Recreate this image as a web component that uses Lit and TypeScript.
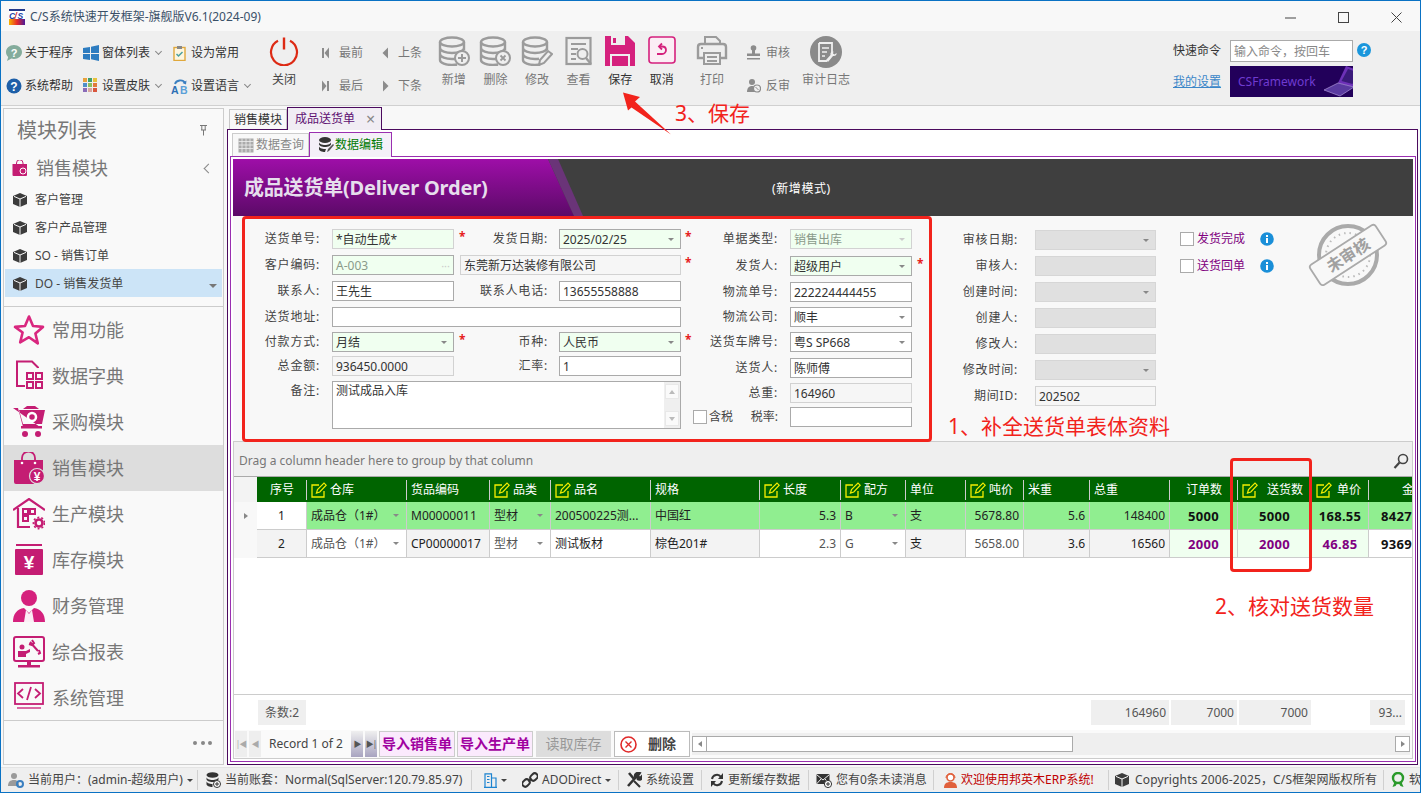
import { LitElement, html, css, svg } from 'lit'
import { customElement } from 'lit/decorators.js'

const ic = (w: number, h: number, body: unknown, vb?: string) =>
  html`<svg class="ic" width=${w} height=${h} viewBox=${vb ?? `0 0 ${w} ${h}`}>${body}</svg>`

const PINK = '#c41d73'
const GR = '#9b9b9b'

const dbBody = svg`
  <g fill="none" stroke=${GR} stroke-width="2.4">
    <ellipse cx="14" cy="6" rx="12" ry="4.5"/>
    <path d="M2 6v18c0 3 6 5 12 5 2 0 4-.2 5-.5M26 6v8M2 12c0 3 6 5 12 5s12-2 12-5M2 18c0 3 6 5 12 5 1.5 0 3-.1 4-.3"/>
  </g>`

const icons = {
  bubble: ic(17, 17, svg`<path d="M9 1c4.4 0 8 3 8 7s-3.600 7-8 7c-1 0-1.800-.1-2.600-.4L2 17l1.200-4C1.800 11.800 1 10 1 8c0-4 3.600-7 8-7z" fill="#84ac9c"/><text x="9" y="12.500" font-size="11" font-weight="700" fill="#fff" text-anchor="middle" font-family="Liberation Sans">?</text>`),
  help: ic(16, 16, svg`<circle cx="8" cy="8" r="7.500" fill="#1d5fa8"/><text x="8" y="12.500" font-size="12" font-weight="700" fill="#fff" text-anchor="middle" font-family="Liberation Sans">?</text>`),
  win: ic(16, 16, svg`<path d="M0 3l7-1v6H0zM8 1.800L16 0v8H8zM0 9h7v6l-7-1zM8 9h8v7l-8-1.800z" fill="#2d7cc0"/>`),
  skin: ic(15, 15, svg`<g>
    <rect width="4" height="4" fill="#e8a23c"/><rect x="5" width="4" height="4" fill="#3f9e6b"/><rect x="10" width="4" height="4" fill="#e8c13c"/>
    <rect y="5" width="4" height="4" fill="#4f8fc8"/><rect x="5" y="5" width="4" height="4" fill="#8cc05a"/><rect x="10" y="5" width="4" height="4" fill="#e07b3c"/>
    <rect y="10" width="4" height="4" fill="#8a6bb8"/><rect x="5" y="10" width="4" height="4" fill="#d9a7a0"/><rect x="10" y="10" width="4" height="4" fill="#d9563c"/></g>`),
  clip: ic(13, 16, svg`<rect x="1" y="2.500" width="11" height="13" fill="#fdf6e0" stroke="#e0a83c" stroke-width="1.400"/><rect x="4" y="1" width="5" height="3" fill="#888"/><path d="M3.500 9l2 2 4-4" fill="none" stroke="#4aa0a0" stroke-width="1.500"/>`),
  lang: ic(17, 16, svg`<path d="M4 6c1-4 8-5 10-1" fill="none" stroke="#3a7fc0" stroke-width="1.800"/><path d="M15.500 2.500l-.5 4-3.500-1.500z" fill="#3a7fc0"/><text x="0" y="15.500" font-size="10.500" font-weight="700" fill="#2d6fb5" font-family="Liberation Sans">A</text><text x="9" y="15.500" font-size="10.500" font-weight="700" fill="#5aa0d8" font-family="Liberation Sans">B</text>`),
  power: ic(30, 30, svg`<path d="M9 4.800a13 13 0 1 0 12 0" fill="none" stroke="#dd2a14" stroke-width="2.200"/><path d="M15 1.500v12" stroke="#dd2a14" stroke-width="2.400"/>`),
  first: ic(12, 12, svg`<rect x="1" y="1" width="2" height="10" fill="#8c8c8c"/><path d="M8 .5v11L3.500 6z" fill="#8c8c8c"/>`),
  last: ic(12, 12, svg`<rect x="6" y="1" width="2" height="10" fill="#8c8c8c"/><path d="M1 .5v11L5.500 6z" fill="#8c8c8c"/>`),
  prev: ic(12, 12, svg`<path d="M7 .5v11L1.500 6z" fill="#8c8c8c"/>`),
  next: ic(12, 12, svg`<path d="M2 .5v11L7.500 6z" fill="#8c8c8c"/>`),
  add: ic(32, 30, svg`${dbBody}<circle cx="24" cy="22" r="7" fill="#efefef" stroke=${GR} stroke-width="2"/><path d="M24 18v8M20 22h8" stroke=${GR} stroke-width="2"/>`),
  del: ic(32, 30, svg`${dbBody}<circle cx="24" cy="22" r="7" fill="#efefef" stroke=${GR} stroke-width="2"/><path d="M21.500 19.500l5 5M26.500 19.500l-5 5" stroke=${GR} stroke-width="1.800"/>`),
  edit: ic(32, 30, svg`${dbBody}<path d="M18 29l1-5 8-9 4 3-8 9z" fill="#efefef" stroke=${GR} stroke-width="2"/>`),
  view: ic(28, 30, svg`<rect x="1.500" y="2" width="24" height="26" fill="none" stroke=${GR} stroke-width="2.200"/><path d="M6 8h15M6 13h7M6 18h5M6 23h5" stroke=${GR} stroke-width="2"/><circle cx="17.500" cy="18" r="5" fill="#efefef" stroke=${GR} stroke-width="2"/><path d="M21 22l5 6" stroke=${GR} stroke-width="2.400"/>`),
  save: ic(30, 30, svg`<path d="M0 0h23l7 7v23H0z" fill="#d5217d"/><rect x="6" y="0" width="14" height="9" fill="#efefef"/><rect x="8" y="2" width="3" height="5" fill="#d5217d"/><rect x="5" y="18" width="20" height="12" fill="#efefef"/><rect x="7" y="20" width="16" height="10" fill="#d5217d"/>`),
  undo: ic(28, 28, svg`<rect x="1" y="1" width="26" height="26" rx="3" fill="#fbeef5" stroke="#d5217d" stroke-width="1.600"/><path d="M14 7.500L11 10.500l3 3" fill="none" stroke="#d5217d" stroke-width="1.800"/><path d="M11.500 10.500h2.500c2.500 0 4 1.500 4 3.500s-1.500 4-4 4H9" fill="none" stroke="#d5217d" stroke-width="1.800"/>`),
  print: ic(32, 30, svg`<path d="M9 8V1h11l4 4v3" fill="none" stroke=${GR} stroke-width="2"/><path d="M7 22H2V11c0-2 1-3 3-3h22c2 0 3 1 3 3v11h-5" fill="none" stroke=${GR} stroke-width="2.400"/><rect x="8" y="17" width="16" height="11" fill="none" stroke=${GR} stroke-width="2"/><path d="M11 21h10M11 25h10M5 12h2" stroke=${GR} stroke-width="2"/>`),
  stamp: ic(15, 15, svg`<circle cx="7.500" cy="3" r="2.800" fill="#8c8c8c"/><rect x="6" y="4" width="3" height="5" fill="#8c8c8c"/><rect x="1" y="8.500" width="13" height="2.500" fill="#8c8c8c"/><rect x="1" y="13" width="13" height="1.500" fill="#8c8c8c"/>`),
  unstamp: ic(15, 15, svg`<circle cx="6" cy="4" r="3" fill="#8c8c8c"/><path d="M1 14c0-4 2-6 5-6s4 2 4 6z" fill="#8c8c8c"/><circle cx="11" cy="10.500" r="3.500" fill="#efefef" stroke="#8c8c8c" stroke-width="1.200"/><path d="M9.500 9l3 3" stroke="#8c8c8c"/>`),
  audit: ic(32, 32, svg`<circle cx="16" cy="16" r="16" fill="#8a8a8a"/><path d="M9 7h13v11M9 7v18h8" fill="none" stroke="#efefef" stroke-width="1.800"/><path d="M12 12h7M12 16h5M12 20h3" stroke="#efefef" stroke-width="1.500"/><path d="M18 26l5-6c2 .5 4-1 3.500-3l-2 1.500-1.500-1 .5-2c-2-.3-3.500 1-3 3.500l-4.500 5z" fill="#efefef"/>`),
  qhelp: ic(14, 14, svg`<circle cx="7" cy="7" r="7" fill="#1a96dc"/><text x="7" y="11" font-size="11" font-weight="700" fill="#fff" text-anchor="middle" font-family="Liberation Sans">?</text>`),
  info: ic(14, 14, svg`<circle cx="7" cy="7" r="6.800" fill="#1a8fd8"/><rect x="6" y="3" width="2" height="2" fill="#fff"/><rect x="6" y="6" width="2" height="5" fill="#fff"/>`),
  pin: ic(9, 11, svg`<path d="M1 .5h7M2 5h5M4.500 5v5.500M2.800 .5v4.500M6.200 .5v4.500" fill="none" stroke="#777" stroke-width="1"/>`),
  cube: ic(14, 14, svg`<path d="M7 0l7 3v8l-7 3-7-3V3z" fill="#3c3c3c"/><path d="M1 3.400L7 6l6-2.600M7 6v8" fill="none" stroke="#f8f8f8" stroke-width="1"/>`),
  star: ic(32, 32, svg`<path d="M16 2.500l4 9.500 10 .9-7.600 6.600 2.400 9.900L16 23.200 7.200 28.400l2.400-9.900L2 12.900l10-.9z" fill="none" stroke="#d9277f" stroke-width="2.600" stroke-linejoin="round"/>`),
  dict: ic(32, 32, svg`<path d="M12 26H4V1.500h15l6 6V8" fill="none" stroke=${PINK} stroke-width="2"/><g fill="none" stroke=${PINK} stroke-width="2"><rect x="14" y="13" width="6" height="6"/><rect x="23" y="13" width="6" height="6"/><rect x="14" y="22" width="6" height="6"/><rect x="23" y="22" width="6" height="6"/></g>`),
  cart: ic(32, 32, svg`<path d="M0 2h5l5 19h17M6 4h26l-3 14H10z" fill=${PINK}/><path d="M10 3l4-3h8l4 3z" fill=${PINK}/><rect x="8" y="20" width="21" height="2.500" fill=${PINK}/><circle cx="12" cy="28" r="3" fill=${PINK}/><circle cx="25" cy="28" r="3" fill=${PINK}/><circle cx="19" cy="11" r="4" fill="none" stroke="#fff" stroke-width="2.500"/>`),
  bag: ic(32, 32, svg`<path d="M1 8h29v15a9 9 0 0 0-9 9H3a2 2 0 0 1-2-2z" fill=${PINK}/><path d="M9 9V6a6 6 0 0 1 13 0v3" fill="none" stroke=${PINK} stroke-width="1.800"/><circle cx="9" cy="11" r="1.300" fill="#fff"/><circle cx="22" cy="11" r="1.300" fill="#fff"/><circle cx="24" cy="24" r="7.500" fill=${PINK} stroke="#ddd" stroke-width="1.200"/><text x="24" y="28.500" font-size="12" font-weight="700" fill="#fff" text-anchor="middle" font-family="Liberation Sans">¥</text>`),
  house: ic(32, 32, svg`<path d="M0 12L16 1l16 11M5 10v19h12" fill="none" stroke=${PINK} stroke-width="2.200"/><g fill="none" stroke=${PINK} stroke-width="2"><rect x="10" y="11" width="5" height="5"/><rect x="17" y="11" width="5" height="5"/><rect x="10" y="18" width="5" height="5"/></g><circle cx="26" cy="25" r="3.500" fill="none" stroke=${PINK} stroke-width="2.600"/><circle cx="26" cy="25" r="5.600" fill="none" stroke=${PINK} stroke-width="1.600" stroke-dasharray="2 2"/>`),
  money: ic(32, 32, svg`<rect x="3" y="0" width="26" height="2" fill=${PINK}/><rect x="2" y="5" width="28" height="26" rx="1" fill=${PINK}/><text x="16" y="25" font-size="19" font-weight="700" fill="#fff" text-anchor="middle" font-family="Liberation Sans">¥</text>`),
  person: ic(32, 32, svg`<circle cx="16" cy="8" r="8" fill="#d5217d"/><path d="M0 32c0-8 4-13 11-14l5 5 5-5c7 1 11 6 11 14z" fill="#d5217d"/><path d="M13 20l3 4 3-4 2 12H11z" fill="#fbeef5"/>`),
  report: ic(32, 32, svg`<rect x="1" y="1" width="30" height="24" rx="2" fill="none" stroke=${PINK} stroke-width="2"/><rect x="5" y="29" width="22" height="2.500" fill=${PINK}/><rect x="14" y="25" width="4" height="4" fill=${PINK}/><circle cx="9" cy="11" r="2.500" fill=${PINK}/><path d="M5 21v-6h8l4-2v3l-4 2v3z" fill=${PINK}/><path d="M17 6l8 9M19 4l2 3-2 2-3-1M26 14l1 3-2 1" fill="none" stroke=${PINK} stroke-width="2"/>`),
  code: ic(30, 30, svg`<rect x="1" y="1" width="28" height="21" fill="none" stroke=${PINK} stroke-width="1.800"/><path d="M9 7l-5 4.500 5 4.500M21 7l5 4.500-5 4.500M17 5l-4 13" fill="none" stroke=${PINK} stroke-width="1.800"/><rect x="3" y="25" width="24" height="2" fill="#d96aa4"/>`),
  gridT: ic(16, 15, svg`<rect x=".5" y=".5" width="15" height="14" fill="#aaa"/><path d="M.5 3.500h15M.5 7h15M.5 10.500h15M4 .5v14M8 .5v14M12 .5v14" stroke="#eee" stroke-width=".8"/>`),
  dbPen: ic(16, 16, svg`<ellipse cx="7" cy="3" rx="6" ry="3" fill="#333"/><path d="M1 5c0 2 3 3 6 3s6-1 6-3v2c0 2-3 3-6 3S1 9 1 7zM1 9c0 2 3 3 6 3l1 0-1 3c-3 0-6-1-6-3z" fill="#333"/><path d="M9 15l1-3 5-5 1 1-5 6z" fill="#555"/>`),
  pen: ic(16, 16, svg`<path d="M13 9v6H1V3h7" fill="none" stroke="#f4ee00" stroke-width="1.300"/><path d="M5.500 11l1-3.500L13 1l2.200 2.200L8.800 10z" fill="none" stroke="#f4ee00" stroke-width="1.200"/>`),
  search: ic(16, 16, svg`<circle cx="10" cy="6" r="4.500" fill="none" stroke="#444" stroke-width="1.600"/><path d="M6.500 9.500L1.500 15" stroke="#444" stroke-width="2.200"/>`),
  delX: ic(17, 17, svg`<circle cx="8.500" cy="8.500" r="7.500" fill="#fff" stroke="#e02a2a" stroke-width="1.600"/><path d="M5.500 5.500l6 6M11.500 5.500l-6 6" stroke="#e02a2a" stroke-width="1.400"/>`),
  users: ic(16, 16, svg`<circle cx="6" cy="4" r="3" fill="#9a9a9a"/><path d="M0 14c0-4 2-6 6-6s5 2 5 6z" fill="#9a9a9a"/><circle cx="12" cy="12" r="3" fill="none" stroke="#3a7fc0" stroke-width="2"/>`),
  dbAdd: ic(15, 16, svg`<ellipse cx="6.500" cy="3" rx="6" ry="2.800" fill="#333"/><path d="M.5 5c0 2 3 3 6 3s6-1 6-3v2c0 2-3 3-6 3s-6-1-6-3zM.5 9c0 2 3 3 6 3v3c-3 0-6-1-6-3z" fill="#333"/><circle cx="11" cy="12" r="3.500" fill="#fff" stroke="#333"/><path d="M11 10v4M9 12h4" stroke="#333"/>`),
  bldg: ic(13, 15, svg`<path d="M1 .8h6.500v13.500H1zM7.500 5H12v9.300H7.500M0 14.300h13M3 3.500h2.500M3 6.500h2.500M3 9.500h2.500" fill="none" stroke="#1d84d0" stroke-width="1.200"/>`),
  link: ic(16, 16, svg`<path d="M6.500 9.500l3-3" stroke="#333" stroke-width="2"/><rect x="9" y="1" width="6" height="8" rx="3" transform="rotate(45 12 5)" fill="none" stroke="#333" stroke-width="2"/><rect x="1" y="7" width="6" height="8" rx="3" transform="rotate(45 4 11)" fill="none" stroke="#333" stroke-width="2"/>`),
  tools: ic(16, 16, svg`<path d="M2 14L11 4M3 1l5 6" stroke="#333" stroke-width="2.600"/><path d="M9 5c-1-3 2-5 5-4l-2 3 2 2 2-2c.5 3-2 5-5 3M8 9l6 6" fill="#333" stroke="#333" stroke-width="2"/>`),
  refresh: ic(14, 14, svg`<path d="M2 6a5 5 0 0 1 9-2M12 8a5 5 0 0 1-9 2" fill="none" stroke="#333" stroke-width="2"/><path d="M13 0v6H8zM1 14V8h5z" fill="#333"/>`),
  mail: ic(16, 16, svg`<rect x=".5" y="2" width="13" height="10" fill="#333"/><path d="M.5 2.500L7 8l6.500-5.500M.5 12L5 7M13.500 12L9 7" fill="none" stroke="#efefef"/><circle cx="12" cy="12" r="3.600" fill="#fff" stroke="#333"/><path d="M12 10v4M10 12h4" stroke="#333"/>`),
  agent: ic(13, 15, svg`<circle cx="6.500" cy="4.500" r="3.500" fill="#fff" stroke="#e0603c" stroke-width="1.600"/><path d="M0 15c0-4 2-6 6.500-6S13 11 13 15z" fill="#e0603c"/><path d="M2 5c0-6 9-6 9 0" fill="none" stroke="#e0603c"/>`),
  ribbon: ic(14, 16, svg`<circle cx="7" cy="6" r="5" fill="none" stroke="#2a9a2a" stroke-width="2.400"/><path d="M3.500 10L1.500 15l3-1 2-3M10.500 10l2 5-3-1-2-3" fill="#2a9a2a"/>`),
  logo: ic(16, 16, svg`<defs><linearGradient id="lg" x1="0" x2="1" y1="0" y2="0"><stop offset="0" stop-color="#f7b500"/><stop offset=".5" stop-color="#e82a2a"/><stop offset="1" stop-color="#4a1a9a"/></linearGradient></defs><rect width="16" height="2" fill="#243a8a"/><rect y="2" width="16" height="8" fill="#fff"/><rect y="10" width="16" height="6" fill="url(#lg)"/><text x="0" y="9.500" font-size="8.500" font-weight="700" font-style="italic" font-family="Liberation Sans" fill="#1c3fa8">C</text><text x="5.500" y="9.500" font-size="8.500" font-weight="700" font-style="italic" font-family="Liberation Sans" fill="#d8202a">/</text><text x="8.500" y="9.500" font-size="8.500" font-weight="700" font-style="italic" font-family="Liberation Sans" fill="#1c3fa8">S</text>`),
  laptop: ic(46, 31, svg`<path d="M30 0L44 5l-6 16-16-4z" fill="#7a3ac8" opacity=".85"/><path d="M32 3l9 3-4.500 12-11-3z" fill="#3a1a7a"/><path d="M8 24l14-7 16 4-14 9z" fill="#5a3aa0" stroke="#c0a8e8" stroke-width=".6"/>`),
  stampBig: ic(80, 64, svg`<circle cx="40" cy="32" r="29" fill="none" stroke="#aaa" stroke-width="4"/><circle cx="40" cy="32" r="22" fill="none" stroke="#bbb" stroke-width="2" stroke-dasharray="1.500 4"/><g transform="rotate(-33 40 32)"><rect x="1" y="20" width="78" height="24" rx="3" fill="#f8f8f8" stroke="#aaa" stroke-width="1.800"/><text x="40" y="38" font-size="16" font-weight="700" fill="#a0a0a0" text-anchor="middle" font-family="Noto Sans CJK SC">未审核</text></g>`),
}

const cols = [
  { t: '序号', k: 'c' }, { t: '仓库', e: 1 }, { t: '货品编码' }, { t: '品类', e: 1 }, { t: '品名', e: 1 },
  { t: '规格' }, { t: '长度', e: 1 }, { t: '配方', e: 1 }, { t: '单位' }, { t: '吨价', e: 1 },
  { t: '米重' }, { t: '总重' }, { t: '订单数', k: 'r' }, { t: '送货数', e: 1, k: 'w' }, { t: '单价', e: 1, k: 'w2' }, { t: '金额', k: 'c' },
]

const rows = [
  ['1', '成品仓（1#）', 'M00000011', '型材', '200500225测...', '中国红', '5.3', 'B', '支', '5678.80', '5.6', '148400', '5000', '5000', '168.55', '842750.00'],
  ['2', '成品仓（1#）', 'CP00000017', '型材', '测试板材', '棕色201#', '2.3', 'G', '支', '5658.00', '3.6', '16560', '2000', '2000', '46.85', '93690.00'],
]
const cellKind = ['c', 'dd', '', 'dd', '', '', 'r', 'dd', '', 'r', 'r', 'r', 'bd', 'bd', 'bd', 'mn']
const row2Bg = ['g', 'n', 'g', 'n', 'n', 'g', 'n', 'n', 'g', 'n', 'g', 'g', 'p', 'p', 'p', 'n']

@customElement('app-root')
export class AppRoot extends LitElement {
  static styles = css`
    :host {
      display: block;
      width: 1421px;
      height: 793px;
      position: relative;
      overflow: hidden;
      font: 12px/16px "Noto Sans", "Noto Sans CJK SC", sans-serif;
      color: #444;
      background: #f8f8f8;
    }
    * { box-sizing: border-box; }
    .ic { display: block; flex: none; }

    .win { height: 793px; border: 1px solid #0a72c4; display: flex; flex-direction: column; }

    .title { height: 30px; flex: none; display: flex; align-items: center; padding: 2px 0 0 8px; gap: 5px; color: #3a5068; background: #f8f8f8; }
    .title .grow { flex: 1; }
    .wbtn { width: 48px; display: flex; justify-content: center; }

    .ribbon { height: 75px; flex: none; background: #efefef; border-bottom: 1px solid #d0d0d0; display: flex; padding: 5px 0 0 4px; color: #444; }
    .small { display: grid; grid-template-columns: 77px 89px 90px; grid-template-rows: 33px 33px; flex: none; }
    .sm { display: flex; align-items: center; gap: 3px; color: #333; }
    .sm .i { width: 17px; display: flex; justify-content: center; flex: none; }
    .chev { width: 5px; height: 5px; border-right: 1px solid #888; border-bottom: 1px solid #888; transform: rotate(45deg); margin: -3px 0 0 3px; }
    .big { display: flex; flex-direction: column; align-items: center; width: 41.6px; flex: none; color: #777; white-space: nowrap; }
    .big .box { height: 34px; display: flex; align-items: flex-start; justify-content: center; }
    .big span { line-height: 20px; }
    .big.on { color: #333; }
    .power { width: 46px; color: #444; }
    .nav { display: grid; grid-template-rows: 33px 33px; flex: none; margin-left: 12px; width: 60px; color: #777; }
    .nav.two { margin-left: 2px; width: 52px; }
    .nav div { display: flex; align-items: center; gap: 6px; padding-left: 2px; }
    .nav.two div { padding-left: 0; gap: 5px; }
    .print { margin-left: 8.4px; width: 42px; }
    .audit-s { display: grid; grid-template-rows: 33px 33px; width: 57px; margin-left: 11px; flex: none; color: #777; }
    .audit-s div { display: flex; align-items: center; gap: 5px; padding-left: 2px; }
    .auditlog { width: 50px; }
    .grow { flex: 1; }
    .quick { display: grid; grid-template-columns: 57px 123px 18px; grid-template-rows: 22px 31px; row-gap: 4px; align-items: center; margin: 4px 49px 0 0; flex: none; color: #333; }
    .quick input { width: 100%; height: 22px; font: inherit; border: 1px solid #aaa; background: #fff; padding: 0 3px; color: #888; outline: none; }
    .quick input::placeholder { color: #888; opacity: 1; }
    .quick .q { padding-left: 4px; margin-top: -2px; }
    .mylink { color: #3a86c8; text-decoration: underline; }
    .banner { height: 31px; background: #22005a; display: flex; align-items: center; justify-content: space-between; padding-left: 8px; color: #6f3bd0; overflow: hidden; }

    .main { flex: 1; display: flex; min-height: 0; }

    .side { width: 221px; margin: 2px 0 2px 2px; border: 1px solid #ccc; flex: none; display: flex; flex-direction: column; background: #f9f9f9; color: #777; }
    .side-head { height: 41px; display: flex; align-items: center; justify-content: space-between; padding: 2px 15px 0 13px; font-size: 20px; line-height: 26px; flex: none; }
    .grp { height: 34px; display: flex; align-items: center; padding: 2px 11px 0 8px; font-size: 18px; gap: 8px; flex: none; }
    .grp .ch { width: 7px; height: 7px; border-left: 1.500px solid #888; border-bottom: 1.500px solid #888; transform: rotate(45deg); margin-left: auto; }
    .sub { height: 28px; display: flex; align-items: center; gap: 8px; padding: 1px 0 0 8px; margin: 0 1px; color: #444; flex: none; }
    .sub.sel { background: #cce4f7; }
    .sub .tri { margin: 5px 5px 0 auto; width: 0; height: 0; border: 4px solid transparent; border-top: 4px solid #777; border-bottom: 0; }
    .subs { padding-bottom: 9px; border-bottom: 1px solid #ccc; flex: none; margin-top: 1px; }
    .mods { flex: none; }
    .mod { height: 46px; display: flex; align-items: center; gap: 7px; padding-left: 9px; font-size: 18px; }
    .mod .i { width: 32px; height: 32px; display: flex; justify-content: center; flex: none; }
    .mod.sel { background: #dddddd; }
    .more { border-top: 1px solid #ccc; margin-top: -1px; flex: 1; display: flex; justify-content: flex-end; align-items: center; gap: 3.500px; padding: 0 11px 0 0; }
    .more i { width: 4px; height: 4px; border-radius: 50%; background: #888; }

    .content { flex: 1; min-width: 0; margin: 1px 2px 2px 3px; display: flex; flex-direction: column; }
    .tabs { display: flex; height: 22px; flex: none; padding-left: 2px; align-items: flex-end; }
    .tab { height: 20px; width: 58px; border: 1px solid #c8c8c8; border-bottom: 0; display: flex; align-items: center; justify-content: center; color: #333; background: #f8f8f8; }
    .tab.act { height: 23px; width: 95px; margin-bottom: -1px; border: 1px solid #4b0a5e; border-bottom: 0; background: #f1edf4; color: #5e1072; position: relative; z-index: 1; justify-content: flex-start; padding-left: 7px; gap: 11px; }
    .tab.act b { font-weight: 400; color: #888; font-size: 16px; }
    .panel { flex: 1; min-height: 0; border: 1px solid #4b0a5e; padding: 2px 1px 2px 2px; display: flex; flex-direction: column; background: #fff; }
    .tabs2 { display: flex; height: 24px; flex: none; padding-left: 2px; align-items: flex-end; }
    .tab2 { width: 77px; height: 23px; border: 1px solid #ccc; border-bottom: 0; color: #888; display: flex; align-items: center; gap: 2px; padding-left: 5px; background: #f8f8f8; }
    .tab2.act { width: 83px; height: 25px; margin-bottom: -1px; border: 1px solid #9a2fb0; border-bottom: 0; color: #007a00; background: #f4f0f8; position: relative; z-index: 1; padding-left: 8px; gap: 1px; }
    .inner { flex: 1; min-height: 0; border: 1px solid #9a2fb0; padding: 2px; display: flex; flex-direction: column; }

    .head { height: 57px; flex: none; background: #3f3f3f; display: flex; align-items: center; overflow: hidden; }
    .head .pur { width: 341px; height: 57px; flex: none; background: linear-gradient(#9e0ea8, #5c0a68); clip-path: polygon(0 0, 315px 0, 341px 57px, 0 57px); display: flex; align-items: center; padding-left: 11px; font-size: 20px; font-weight: 700; color: #e6deec; white-space: nowrap; letter-spacing: -.2px; }
    .head .stripe { width: 35px; height: 57px; margin-left: -26px; flex: none; background: #6a3478; clip-path: polygon(0 0, 10px 0, 35px 57px, 26px 57px); }
    .head .mode { margin-left: 189px; color: #fff; font-size: 12px; padding-top: 2px; letter-spacing: .6px; }

    .form { height: 225px; flex: none; display: flex; background: #f8f8f8; }
    .gl { display: grid; grid-template-columns: 87px 12px 122px 16px 78px 11px 122px 9px; grid-template-rows: 26px 26px 26px 25px 24px 25px 48px; padding-top: 13px; flex: none; align-items: start; }
    .gc { display: grid; grid-template-columns: 88px 12px 122px 15px; grid-template-rows: 27px 26px 25px 25px 26px 25px 24px 20px; padding-top: 13px; flex: none; align-items: start; }
    .gd { display: grid; grid-template-columns: 91px 17px 121px; grid-template-rows: repeat(7, 26px); padding-top: 14px; flex: none; align-items: start; }
    .lb { grid-column: 1; text-align: right; line-height: 20px; color: #444; white-space: nowrap; letter-spacing: .8px; }
    .lb.m { grid-column: 5; }
    .in { height: 20px; border: 1px solid #aaa; background: #fff; display: flex; align-items: center; padding: 1px 3px 0; color: #333; white-space: nowrap; overflow: hidden; }
    .in.req { background: #f0fff0; }
    .in.ro { border-color: #d2d2d2; background: #f6f6f6; }
    .in.rq { border-color: #d2d2d2; background: #f0fff0; }
    .in.dis { border-color: #d6d6d6; background: #e0e0e0; }
    .in .car { margin-left: auto; margin-right: 3px; width: 0; height: 0; border: 3.500px solid transparent; border-top: 3.500px solid #888; border-bottom: 0; flex: none; }
    .in .car.lt { border-top-color: #ccc; }
    .in .dots { margin-left: auto; color: #ccc; font-size: 11px; letter-spacing: 0; }
    .in.mute { color: #8a9a8a; }
    .a { grid-column: 3; }
    .b { grid-column: 7; }
    .s { color: #e62020; line-height: 16px; padding-left: 5px; font-weight: 700; }
    .s4 { grid-column: 4; }
    .s8 { grid-column: 8; padding-left: 4px; }
    .name { grid-column: 4 / 8; margin-left: 6px; }
    .addr { grid-column: 3 / 8; }
    .memo { grid-column: 3 / 8; height: 48px; align-items: flex-start; padding: 0 0 0 3px; }
    .memo span { padding-top: 1px; }
    .sb { margin-left: auto; width: 16px; height: 46px; background: #efefef; display: flex; flex-direction: column; justify-content: space-between; align-items: center; flex: none; padding: 2px 0; }
    .sb i { width: 14px; height: 15px; background: #fafafa; border: 1px solid #e8e8e8; display: flex; align-items: center; justify-content: center; }
    .up { width: 0; height: 0; border: 3px solid transparent; border-bottom: 4px solid #bbb; border-top: 0; }
    .dn { width: 0; height: 0; border: 3px solid transparent; border-top: 4px solid #bbb; border-bottom: 0; }
    .ctax { display: flex; justify-content: space-between; padding-left: 3px; line-height: 20px; letter-spacing: 0; }
    .ctax span { display: flex; align-items: center; gap: 2px; }
    .cb { width: 14px; height: 14px; border: 1px solid #aaa; background: #fff; display: block; flex: none; }
    .ge { display: grid; grid-template-columns: auto 15px 14px; grid-template-rows: 14px 14px; row-gap: 13px; align-items: center; margin: 16px 0 0 24px; height: 60px; flex: none; color: #800080; }
    .ge div { display: flex; align-items: center; gap: 3px; }
    .stampb { margin: 7px 0 0 34px; flex: none; }

    .gridw { flex: 1; min-height: 0; border: 1px solid #ccc; display: flex; flex-direction: column; background: #fff; }
    .group { height: 35px; flex: none; background: #efefef; border-bottom: 1px solid #aaa; display: flex; align-items: center; justify-content: space-between; padding: 4px 3px 0 5px; color: #777; }
    .tbl, .foot { display: grid; grid-template-columns: 23px 50px 100px 83px 61px 100px 109px 81px 65px 60px 58px 66px 80px 68px 74px 57px 90px; overflow: hidden; flex: none; }
    .hc0 { height: 25px; background: #f3f3f3; }
    .hc { height: 25px; background: #006400 linear-gradient(#ccc, #ccc) right center / 1px 20px no-repeat; color: #fff; display: flex; align-items: center; gap: 3px; padding: 0 4px; overflow: hidden; white-space: nowrap; }
    .hc.c { justify-content: center; }
    .hc.r { justify-content: flex-end; padding-right: 16px; }
    .hc.w { gap: 9px; }
    .hc.w2 { gap: 5px; }
    .ind { height: 28px; background: #f8f8f8; display: flex; align-items: center; justify-content: center; }
    .ind .t { width: 0; height: 0; border: 3.500px solid transparent; border-left: 4px solid #888; border-right: 0; }
    .td { height: 28px; border-right: 1px solid #ccc; border-bottom: 1px solid #ccc; display: flex; align-items: center; padding: 0 4px; overflow: hidden; white-space: nowrap; color: #222; }
    .td.on { background: #90ee90; }
    .td.w { background: #fff; }
    .td.g { background: #f3f3f3; }
    .td.n { background: #fff; }
    .td.p { background: #f0fff0; }
    .td.c { justify-content: center; }
    .td.r { justify-content: flex-end; }
    .td.dd { justify-content: space-between; }
    .td.dd i { width: 0; height: 0; border: 3px solid transparent; border-top: 3.500px solid #888; border-bottom: 0; margin-right: 3px; flex: none; }
    .td.n.dd { color: #555; }
    .td.r.n { color: #555; }
    .td.bd, .td.mn { font-weight: 700; font-size: 13px; color: #111; letter-spacing: .3px; }
    .td.bd { justify-content: center; }
    .td.bd.p { color: #800080; }
    .td.mn { padding-left: 12px; border-right: 0; }
    .fill { flex: 1; min-height: 0; border-bottom: 1px solid #ccc; }
    .foot { height: 35px; padding-top: 5px; align-items: start; }
    .fc { height: 25px; background: #efefef; display: flex; align-items: center; justify-content: flex-end; padding: 0 3px; margin: 0 1px; color: #555; }
    .fc.l { justify-content: center; }
    .fc.last { width: 35px; }
    .pager { height: 28px; flex: none; display: flex; align-items: center; padding-left: 1px; background: #fafafa; }
    .pg { width: 12px; height: 26px; margin-right: 2px; background: #eee; display: flex; align-items: center; justify-content: center; flex: none; color: #aaa; font-size: 8px; letter-spacing: -1px; }
    .pg.on { background: linear-gradient(#efefef, #a8a4c0); color: #555; }
    .rec { width: 88px; padding-left: 6px; color: #444; flex: none; white-space: nowrap; }
    .btn { width: 76px; height: 26px; margin-right: 2px; border: 1px solid #ccc; background: #fbeafd; color: #a000a0; font-weight: 700; font-size: 14px; display: flex; align-items: center; justify-content: center; flex: none; white-space: nowrap; }
    .btn.off { width: 75px; background: #ddd; border-color: #ddd; color: #999; font-weight: 400; margin-left: 1px; }
    .btn.delb { background: #fff; border-color: #bbb; color: #444; font-weight: 700; margin-left: 1px; gap: 11px; justify-content: flex-start; padding-left: 5px; }
    .hs { flex: 1; height: 22px; margin-right: 2px; background: #efefef; display: flex; align-items: center; }
    .hs .a1 { width: 15px; height: 16px; background: #fff; border: 1px solid #aaa; display: flex; align-items: center; justify-content: center; flex: none; }
    .hs .th { width: 366px; height: 16px; background: #fff; border: 1px solid #aaa; border-left: 0; flex: none; }
    .hs .a2 { margin-left: auto; }
    .la { width: 0; height: 0; border: 3px solid transparent; border-right: 4px solid #888; border-left: 0; }
    .ra { width: 0; height: 0; border: 3px solid transparent; border-left: 4px solid #888; border-right: 0; }

    .status { height: 25px; flex: none; background: #efefef; display: flex; align-items: center; overflow: hidden; color: #444; border-top: 1px solid #e4e4e4; }
    .st { height: 20px; display: flex; align-items: center; gap: 4px; flex: none; white-space: nowrap; border-right: 1px solid #d0d0d0; }
    .st.nb { border-right: 0; }
    .st .car { width: 0; height: 0; border: 3px solid transparent; border-top: 3px solid #444; border-bottom: 0; }
    .st.red { color: #c00000; }
    .st .copy { margin-left: 2px; letter-spacing: .15px; }

    .rect { position: absolute; border: 3px solid #f2231c; border-radius: 4px; pointer-events: none; }
    .note { position: absolute; color: #f2231c; font-size: 21px; line-height: 26px; white-space: nowrap; }
    .arrow { position: absolute; left: 620px; top: 90px; }
  `

  private smallBtn (icon: unknown, text: string, chev = false) {
    return html`<div class="sm"><span class="i">${icon}</span>${text}${chev ? html`<i class="chev"></i>` : ''}</div>`
  }

  private bigBtn (icon: unknown, text: string, cls = '') {
    return html`<div class="big ${cls}"><div class="box">${icon}</div><span>${text}</span></div>`
  }

  private ribbon () {
    return html`
      <div class="ribbon">
        <div class="small">
          ${this.smallBtn(icons.bubble, '关于程序')}
          ${this.smallBtn(icons.win, '窗体列表', true)}
          ${this.smallBtn(icons.clip, '设为常用')}
          ${this.smallBtn(icons.help, '系统帮助')}
          ${this.smallBtn(icons.skin, '设置皮肤', true)}
          ${this.smallBtn(icons.lang, '设置语言', true)}
        </div>
        ${this.bigBtn(icons.power, '关闭', 'power')}
        <div class="nav">
          <div>${icons.first}最前</div>
          <div>${icons.last}最后</div>
        </div>
        <div class="nav two">
          <div>${icons.prev}上条</div>
          <div>${icons.next}下条</div>
        </div>
        ${this.bigBtn(icons.add, '新增')}
        ${this.bigBtn(icons.del, '删除')}
        ${this.bigBtn(icons.edit, '修改')}
        ${this.bigBtn(icons.view, '查看')}
        ${this.bigBtn(icons.save, '保存', 'on')}
        ${this.bigBtn(icons.undo, '取消', 'on')}
        ${this.bigBtn(icons.print, '打印', 'print')}
        <div class="audit-s">
          <div>${icons.stamp}审核</div>
          <div>${icons.unstamp}反审</div>
        </div>
        ${this.bigBtn(icons.audit, '审计日志', 'auditlog')}
        <div class="grow"></div>
        <div class="quick">
          <span>快速命令</span>
          <input placeholder="输入命令，按回车" />
          <span class="q">${icons.qhelp}</span>
          <span class="mylink">我的设置</span>
          <div class="banner"><span>CSFramework</span>${icons.laptop}</div>
          <span></span>
        </div>
      </div>`
  }

  private sidebar () {
    const mods: [unknown, string, boolean?][] = [
      [icons.star, '常用功能'], [icons.dict, '数据字典'], [icons.cart, '采购模块'],
      [icons.bag, '销售模块', true], [icons.house, '生产模块'], [icons.money, '库存模块'],
      [icons.person, '财务管理'], [icons.report, '综合报表'], [icons.code, '系统管理'],
    ]
    const bagSmall = html`<svg class="ic" width="16" height="16" viewBox="0 0 32 32">${svg`<path d="M1 8h29v22a2 2 0 0 1-2 2H3a2 2 0 0 1-2-2z" fill=${PINK}/><path d="M9 9V6a6 6 0 0 1 13 0v3" fill="none" stroke=${PINK} stroke-width="2"/><circle cx="22" cy="22" r="6" fill="none" stroke="#fff" stroke-width="2"/>`}</svg>`
    return html`
      <aside class="side">
        <div class="side-head"><span>模块列表</span>${icons.pin}</div>
        <div class="grp">${bagSmall}<span>销售模块</span><i class="ch"></i></div>
        <div class="subs">
          <div class="sub">${icons.cube}客户管理</div>
          <div class="sub">${icons.cube}客户产品管理</div>
          <div class="sub">${icons.cube}SO - 销售订单</div>
          <div class="sub sel">${icons.cube}DO - 销售发货单<i class="tri"></i></div>
        </div>
        <div class="mods">
          ${mods.map(([i, t, sel]) => html`<div class="mod ${sel ? 'sel' : ''}"><span class="i">${i}</span>${t}</div>`)}
        </div>
        <div class="more"><i></i><i></i><i></i></div>
      </aside>`
  }

  private formArea () {
    const car = html`<i class="car"></i>`
    const star = (c: string) => html`<span class="s ${c}">*</span>`
    return html`
      <div class="form">
        <div class="gl">
          <span class="lb">送货单号:</span><div class="in rq a">*自动生成*</div>${star('s4')}
          <span class="lb m">发货日期:</span><div class="in req b">2025/02/25${car}</div>${star('s8')}

          <span class="lb">客户编码:</span><div class="in req a mute">A-003<span class="dots">···</span></div>
          <div class="in ro name">东莞新万达装修有限公司</div>${star('s8')}

          <span class="lb">联系人:</span><div class="in a">王先生</div>
          <span class="lb m">联系人电话:</span><div class="in b">13655558888</div><span></span>

          <span class="lb">送货地址:</span><div class="in addr"></div><span></span>

          <span class="lb">付款方式:</span><div class="in req a">月结${car}</div>${star('s4')}
          <span class="lb m">币种:</span><div class="in req b">人民币${car}</div>${star('s8')}

          <span class="lb">总金额:</span><div class="in ro a">936450.0000</div>
          <span class="lb m">汇率:</span><div class="in b">1</div><span></span>

          <span class="lb">备注:</span>
          <div class="in memo"><span>测试成品入库</span><div class="sb"><i><b class="up"></b></i><i><b class="dn"></b></i></div></div>
        </div>
        <div class="gc">
          <span class="lb">单据类型:</span><div class="in rq a mute">销售出库<i class="car lt"></i></div><span></span>
          <span class="lb">发货人:</span><div class="in req a">超级用户${car}</div><span class="s">*</span>
          <span class="lb">物流单号:</span><div class="in a">222224444455</div><span></span>
          <span class="lb">物流公司:</span><div class="in a">顺丰${car}</div><span></span>
          <span class="lb">送货车牌号:</span><div class="in a">粤S SP668${car}</div><span></span>
          <span class="lb">送货人:</span><div class="in a">陈师傅</div><span></span>
          <span class="lb">总重:</span><div class="in ro a">164960</div><span></span>
          <div class="lb ctax"><span><i class="cb"></i>含税</span><span>税率:</span></div><div class="in a"></div>
        </div>
        <div class="gd">
          <span class="lb">审核日期:</span><div class="in dis a">${car}</div>
          <span class="lb">审核人:</span><div class="in dis a"></div>
          <span class="lb">创建时间:</span><div class="in dis a">${car}</div>
          <span class="lb">创建人:</span><div class="in dis a"></div>
          <span class="lb">修改人:</span><div class="in dis a"></div>
          <span class="lb">修改时间:</span><div class="in dis a">${car}</div>
          <span class="lb">期间ID:</span><div class="in ro a">202502</div>
        </div>
        <div class="ge">
          <div><i class="cb"></i>发货完成</div><span></span>${icons.info}
          <div><i class="cb"></i>送货回单</div><span></span>${icons.info}
        </div>
        <div class="stampb">${icons.stampBig}</div>
      </div>`
  }

  private table () {
    return html`
      <div class="tbl">
        <div class="hc0"></div>
        ${cols.map(c => html`<div class="hc ${c.k ?? ''}">${c.e ? icons.pen : ''}<span>${c.t}</span></div>`)}
        ${rows.map((r, i) => html`
          <div class="ind">${i === 0 ? html`<i class="t"></i>` : ''}</div>
          ${r.map((v, j) => {
            const bg = i === 0 ? (j === 0 ? 'w' : 'on') : row2Bg[j]
            return html`<div class="td ${cellKind[j]} ${bg}"><span>${v}</span>${cellKind[j] === 'dd' ? html`<i></i>` : ''}</div>`
          })}`)}
      </div>`
  }

  private statusBar () {
    const item = (w: number, pad: number, body: unknown, cls = '') =>
      html`<div class="st ${cls}" style="width:${w}px;padding-left:${pad}px">${body}</div>`
    const car = html`<i class="car"></i>`
    return html`
      <footer class="status">
        ${item(197, 7, html`${icons.users}当前用户：(admin-超级用户)${car}`)}
        ${item(274, 8, html`${icons.dbAdd}当前账套：Normal(SqlServer:120.79.85.97)`)}
        ${item(43, 12, html`${icons.bldg}${car}`, 'nb')}
        ${item(104, 7, html`${icons.link}ADODirect${car}`)}
        ${item(83, 7, html`${icons.tools}系统设置`)}
        ${item(107, 8, html`${icons.refresh}更新缓存数据`)}
        ${item(125, 7, html`${icons.mail}您有0条未读消息`)}
        ${item(175, 10, html`${icons.agent}欢迎使用邦英木ERP系统!`, 'red')}
        ${item(275, 6, html`${icons.cube}<span class="copy">Copyrights 2006-2025，C/S框架网版权所有</span>`)}
        ${item(36, 7, html`${icons.ribbon}软件`, 'nb')}
      </footer>`
  }

  render () {
    return html`
      <div class="win">
        <header class="title">
          ${icons.logo}
          <span>C/S系统快速开发框架-旗舰版V6.1(2024-09)</span>
          <span class="grow"></span>
          <div class="wbtn">${ic(11, 11, svg`<path d="M0 6h11" stroke="#444"/>`)}</div>
          <div class="wbtn">${ic(11, 11, svg`<rect x=".5" y=".5" width="10" height="10" fill="none" stroke="#444"/>`)}</div>
          <div class="wbtn">${ic(11, 11, svg`<path d="M.5 .5l10 10M10.500 .5l-10 10" stroke="#444"/>`)}</div>
        </header>
        ${this.ribbon()}
        <div class="main">
          ${this.sidebar()}
          <section class="content">
            <div class="tabs">
              <div class="tab">销售模块</div>
              <div class="tab act">成品送货单<b>×</b></div>
            </div>
            <div class="panel">
              <div class="tabs2">
                <div class="tab2">${icons.gridT}数据查询</div>
                <div class="tab2 act">${icons.dbPen}数据编辑</div>
              </div>
              <div class="inner">
                <div class="head">
                  <div class="pur">成品送货单(Deliver Order)</div>
                  <div class="stripe"></div>
                  <span class="mode">(新增模式)</span>
                </div>
                ${this.formArea()}
                <div class="gridw">
                  <div class="group"><span>Drag a column header here to group by that column</span>${icons.search}</div>
                  ${this.table()}
                  <div class="fill"></div>
                  <div class="foot">
                    <span></span><div class="fc l">条数:2</div>
                    <span></span><span></span><span></span><span></span><span></span><span></span><span></span><span></span><span></span><span></span>
                    <div class="fc">164960</div><div class="fc">7000</div><div class="fc">7000</div><span></span>
                    <div class="fc last">93...</div>
                  </div>
                  <div class="pager">
                    <div class="pg">|◀</div><div class="pg">◀</div>
                    <span class="rec">Record 1 of 2</span>
                    <div class="pg on">▶</div><div class="pg on">▶|</div>
                    <div class="btn">导入销售单</div>
                    <div class="btn">导入生产单</div>
                    <div class="btn off">读取库存</div>
                    <div class="btn delb">${icons.delX}删除</div>
                    <div class="hs">
                      <div class="a1"><i class="la"></i></div>
                      <div class="th"></div>
                      <div class="a1 a2"><i class="ra"></i></div>
                    </div>
                  </div>
                </div>
              </div>
            </div>
          </section>
        </div>
        ${this.statusBar()}
      </div>

      <div class="rect" style="left:242px;top:216px;width:690px;height:226px"></div>
      <div class="rect" style="left:1230px;top:458px;width:82px;height:114px"></div>
      <svg class="arrow" width="54" height="48" viewBox="620 90 54 48">
        <path d="M623 92.500l17 4.500-5 4.500 36 33-39.500-27-3.500 3z" fill="#f2231c"/>
      </svg>
      <span class="note" style="left:675px;top:100px">3、保存</span>
      <span class="note" style="left:948px;top:413px">1、补全送货单表体资料</span>
      <span class="note" style="left:1215px;top:593px">2、核对送货数量</span>
    `
  }
}
